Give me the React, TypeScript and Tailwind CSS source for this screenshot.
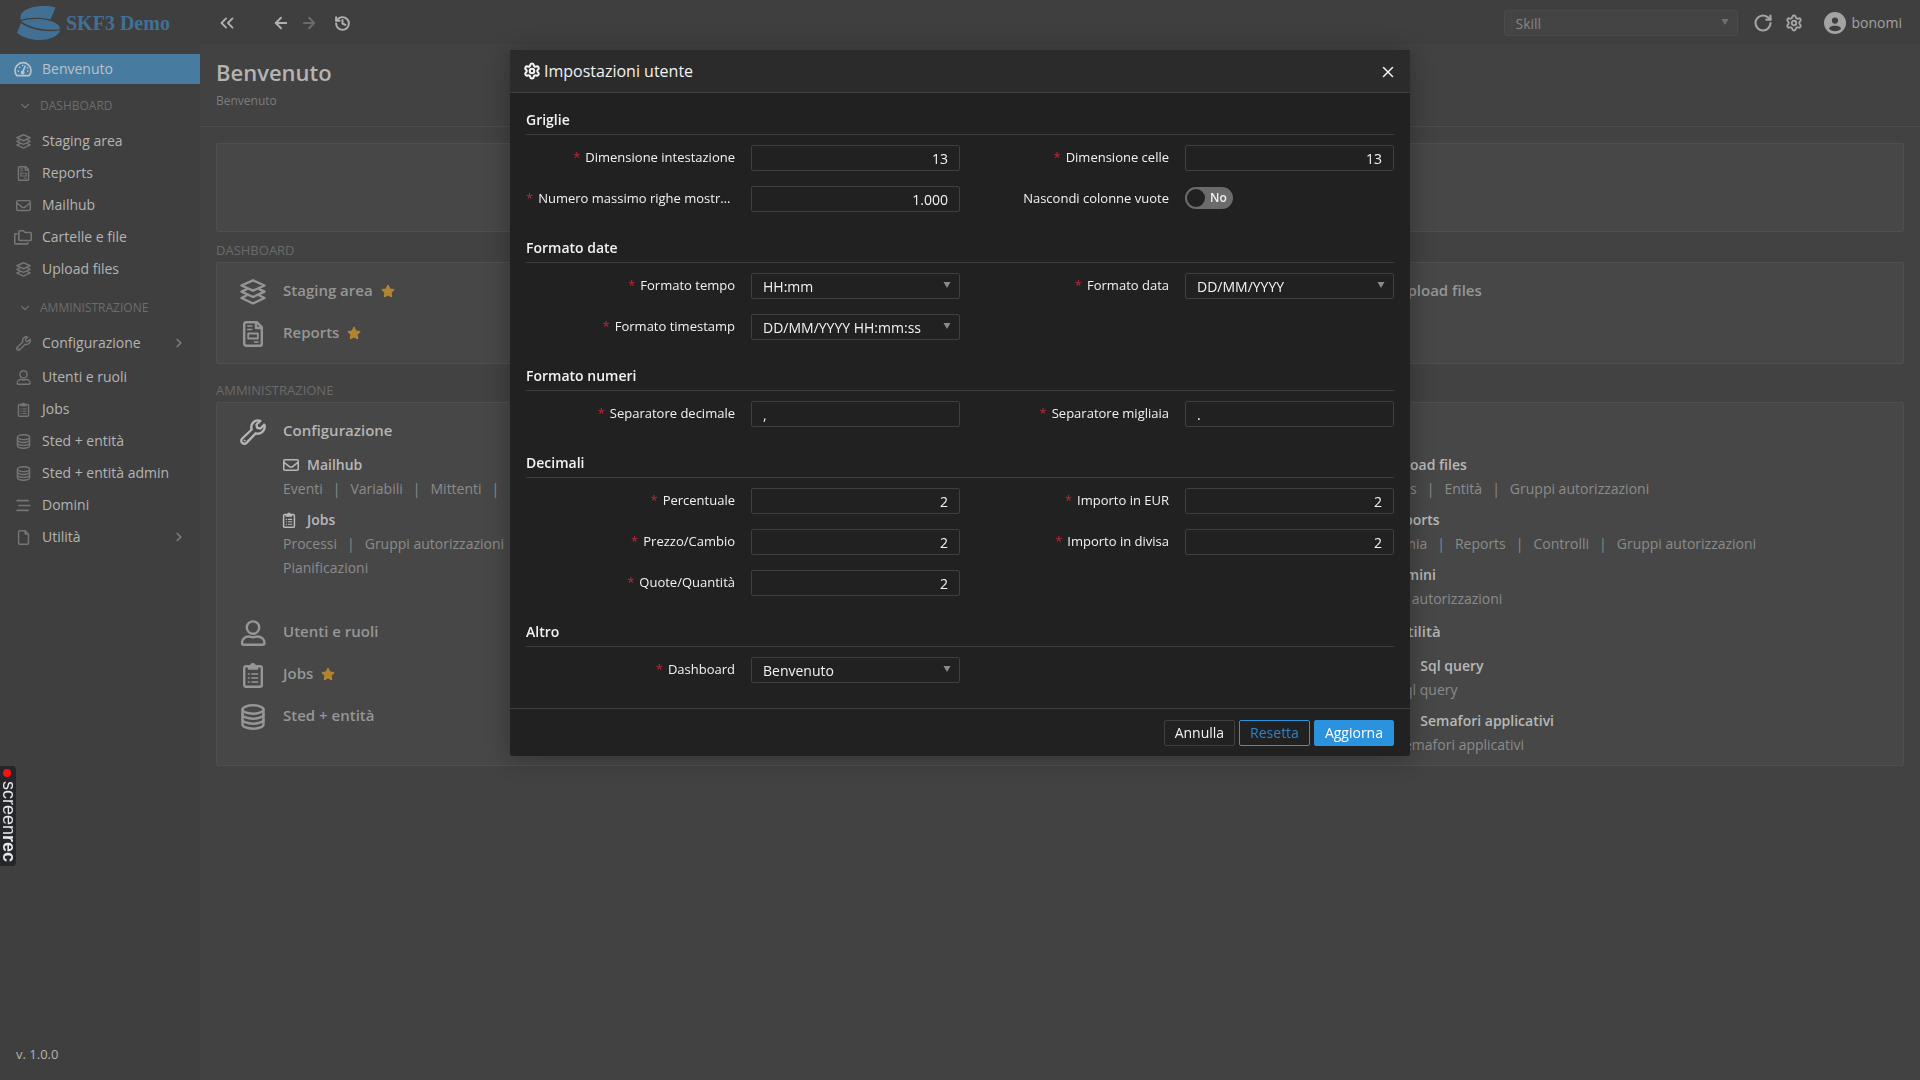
import { ReactNode } from "react";
import {
  ArrowLeft,
  ArrowRight,
  ChevronDown,
  ChevronRight,
  ChevronsLeft,
  History,
  RotateCw,
  Settings,
  X,
} from "lucide-react";
import { FaCircleUser, FaRegEnvelope, FaRegFile, FaStar } from "react-icons/fa6";

type TIcon = { className?: string };

type TMenuItem = {
  title: string;
  icon: ReactNode;
  hasChildren?: boolean;
};

type TField = {
  id: string;
  label: string;
  value: string;
  type: "number" | "text" | "select" | "switch";
};

type TSection = { title: string; fields: TField[] };

type TBlock = { title: string; icon?: ReactNode; links: string[] };

const Svg = ({ className, children }: TIcon & { children: ReactNode }) => (
  <svg
    viewBox="0 0 26 26"
    className={className}
    fill="none"
    stroke="currentColor"
    strokeWidth="2.4"
    strokeLinecap="round"
    strokeLinejoin="round"
    aria-hidden="true"
  >
    {children}
  </svg>
);

const LayersIcon = ({ className }: TIcon) => (
  <Svg className={className}>
    <path d="M13 1.3 24.500 6.500 13 11.700 1.500 6.500z" />
    <path d="M6.500 10.300 1.500 12.700 13 18l11.500-5.300-5-2.400" />
    <path d="M6.500 16.500 1.500 19 13 24.500 24.500 19l-5-2.500" />
  </Svg>
);

const ReportIcon = ({ className }: TIcon) => (
  <Svg className={className}>
    <path d="M4.200 3.200a2 2 0 0 1 2-2h10.600l5 5v16.600a2 2 0 0 1-2 2H6.200a2 2 0 0 1-2-2z" />
    <path d="M16 1.500v5.500h5.500" />
    <path d="M7.800 5h4M7.800 8.500h4M14.500 21h3.500" strokeWidth="1.600" />
    <path d="M8.200 12.500h9.600v5H8.200z" strokeWidth="1.800" />
  </Svg>
);

const FoldersIcon = ({ className }: TIcon) => (
  <Svg className={className}>
    <path d="M7 5.500a1.500 1.500 0 0 1 1.500-1.500h5l2.500 2.500h7.500A1.500 1.500 0 0 1 25 8v8.500a1.500 1.500 0 0 1-1.500 1.500h-15A1.500 1.500 0 0 1 7 16.500z" />
    <path d="M4 8.500H2.500A1.500 1.500 0 0 0 1 10v11.500A1.500 1.500 0 0 0 2.500 23h16a1.500 1.500 0 0 0 1.500-1.500" />
  </Svg>
);

const WrenchIcon = ({ className }: TIcon) => (
  <Svg className={className}>
    <path d="M20.300 1.800a6.800 6.800 0 0 0-8.600 8.700L2.200 19.500a3 3 0 0 0 4.300 4.300l9.200-9.500a6.800 6.800 0 0 0 8.600-8.600L20.500 9.500l-3.300-.700-.700-3.300z" />
    <circle cx="4.600" cy="21.500" r="0.500" strokeWidth="1" />
  </Svg>
);

const UserIcon = ({ className }: TIcon) => (
  <Svg className={className}>
    <circle cx="13" cy="7.600" r="6.200" />
    <path d="M8.500 16.500c2 0 2.500.800 4.500.800s2.500-.800 4.500-.800c4 0 7 2.800 7 6.200 0 1.200-.800 2-2 2H4c-1.200 0-2-.800-2-2 0-3.400 3-6.200 6.500-6.200z" />
  </Svg>
);

const ClipboardIcon = ({ className }: TIcon) => (
  <Svg className={className}>
    <rect x="4.200" y="4.200" width="17.600" height="20.600" rx="1.800" />
    <path d="M8.500 4h2.200a2.300 2.300 0 0 1 4.600 0h2.200v3h-9z" fill="currentColor" strokeWidth="1.400" />
    <path d="M12 12h5.500M12 16h5.500M12 20h5.500M8.500 12h.500M8.500 16h.500M8.500 20h.500" strokeWidth="1.700" />
  </Svg>
);

const DatabaseIcon = ({ className }: TIcon) => (
  <Svg className={className}>
    <ellipse cx="13" cy="5.500" rx="10.500" ry="4.200" />
    <path d="M2.500 5.500v15c0 2.300 4.700 4.200 10.500 4.200s10.500-1.900 10.500-4.200v-15" />
    <path d="M2.500 10.500c0 2.300 4.700 4.200 10.500 4.200s10.500-1.900 10.500-4.200M2.500 15.500c0 2.300 4.700 4.200 10.500 4.200s10.500-1.900 10.500-4.200" />
  </Svg>
);

const GaugeIcon = ({ className }: TIcon) => (
  <Svg className={className}>
    <path d="M4 22.500a11.500 11.500 0 1 1 18 0z" />
    <path d="M12.500 17.500 16 9" />
    <circle cx="12.500" cy="18" r="1.600" fill="currentColor" />
    <path d="M6 16h.500M8 10.500h.300M12.500 8h.100M19.800 16h.200M19.500 11.500h.100" />
  </Svg>
);

const LinesIcon = ({ className }: TIcon) => (
  <Svg className={className}>
    <path d="M2 4.500h19M5 13h19M2 21.500h19" strokeWidth="3" />
  </Svg>
);

const Logo = () => (
  <svg viewBox="0 0 44 35" className="w-11 h-[35px]" fill="#427095" aria-hidden="true">
    <path d="M38.500 1.500 33.500 13.500C24 11 12 11 4 14 1 8 8 2 20 .500c6-.800 13-.500 18.500 1z" />
    <path d="M4.200 15.300C14 11.300 34 12.500 41 19c1.500 1.500 2 3 2 4.300C30 25 14 22.500 4.200 15.300z" />
    <path d="M4 17c9 7 25 9.500 39 7.500-1 5-10 9.500-20 9.500-9 0-17-2.500-23-7z" />
  </svg>
);

const dashboardMenu: TMenuItem[] = [
  { title: "Staging area", icon: <LayersIcon className="size-[15px]" /> },
  { title: "Reports", icon: <ReportIcon className="size-[15px]" /> },
  { title: "Mailhub", icon: <FaRegEnvelope className="size-[15px]" /> },
  { title: "Cartelle e file", icon: <FoldersIcon className="size-[18px]" /> },
  { title: "Upload files", icon: <LayersIcon className="size-[15px]" /> },
];

const adminMenu: TMenuItem[] = [
  { title: "Utenti e ruoli", icon: <UserIcon className="size-[15px]" /> },
  { title: "Jobs", icon: <ClipboardIcon className="size-[15px]" /> },
  { title: "Sted + entità", icon: <DatabaseIcon className="size-[15px]" /> },
  { title: "Sted + entità admin", icon: <DatabaseIcon className="size-[15px]" /> },
  { title: "Domini", icon: <LinesIcon className="size-[15px]" /> },
  { title: "Utilità", icon: <FaRegFile className="size-[15px]" />, hasChildren: true },
];

const configLeft: TBlock[] = [
  {
    title: "Mailhub",
    icon: <FaRegEnvelope className="size-4" />,
    links: ["Eventi", "Variabili", "Mittenti", "Modelli"],
  },
  {
    title: "Jobs",
    icon: <ClipboardIcon className="-ml-0.5 size-4" />,
    links: ["Processi", "Gruppi autorizzazioni", "Pianificazioni"],
  },
];

const configRight: TBlock[] = [
  {
    title: "Upload files",
    icon: <LayersIcon className="size-4" />,
    links: ["Uploads", "Entità", "Gruppi autorizzazioni"],
  },
  {
    title: "Reports",
    icon: <ReportIcon className="size-4" />,
    links: ["Economia", "Reports", "Controlli", "Gruppi autorizzazioni"],
  },
  {
    title: "Domini",
    icon: <LinesIcon className="size-4" />,
    links: ["Gruppi autorizzazioni"],
  },
];

const utilityBlocks: TBlock[] = [
  { title: "Sql query", links: ["Sql query"] },
  { title: "Semafori applicativi", links: ["Semafori applicativi"] },
];

const sections: TSection[] = [
  {
    title: "Griglie",
    fields: [
      { id: "headerSize", label: "Dimensione intestazione", value: "13", type: "number" },
      { id: "cellSize", label: "Dimensione celle", value: "13", type: "number" },
      { id: "maxRows", label: "Numero massimo righe mostrate", value: "1.000", type: "number" },
      { id: "hideEmpty", label: "Nascondi colonne vuote", value: "No", type: "switch" },
    ],
  },
  {
    title: "Formato date",
    fields: [
      { id: "timeFormat", label: "Formato tempo", value: "HH:mm", type: "select" },
      { id: "dateFormat", label: "Formato data", value: "DD/MM/YYYY", type: "select" },
      { id: "timestampFormat", label: "Formato timestamp", value: "DD/MM/YYYY HH:mm:ss", type: "select" },
    ],
  },
  {
    title: "Formato numeri",
    fields: [
      { id: "decimalSeparator", label: "Separatore decimale", value: ",", type: "text" },
      { id: "thousandSeparator", label: "Separatore migliaia", value: ".", type: "text" },
    ],
  },
  {
    title: "Decimali",
    fields: [
      { id: "percent", label: "Percentuale", value: "2", type: "number" },
      { id: "amountEur", label: "Importo in EUR", value: "2", type: "number" },
      { id: "price", label: "Prezzo/Cambio", value: "2", type: "number" },
      { id: "amountCurrency", label: "Importo in divisa", value: "2", type: "number" },
      { id: "quantity", label: "Quote/Quantità", value: "2", type: "number" },
    ],
  },
  {
    title: "Altro",
    fields: [{ id: "dashboard", label: "Dashboard", value: "Benvenuto", type: "select" }],
  },
];

const Caret = ({ className }: TIcon) => (
  <svg
    viewBox="0 0 8 6"
    className={`absolute right-[9px] top-[9px] w-2 h-1.5 pointer-events-none ${className}`}
    fill="currentColor"
    aria-hidden="true"
  >
    <path d="M0.500 0h7L4 6z" />
  </svg>
);

const Header = () => (
  <header className="flex items-center h-11 pt-0.5 bg-[#3f3f3f]">
    <a href="#" className="flex items-center gap-[5px] w-[200px] shrink-0 pl-[17px]">
      <Logo />
      <span className="font-['Liberation_Serif',serif] font-bold text-xl text-[#427095]">
        SKF3 Demo
      </span>
    </a>
    <div className="flex items-center grow pl-4 text-[#b0b0b0]">
      <button aria-label="Comprimi menu">
        <ChevronsLeft className="size-[22px]" />
      </button>
      <button aria-label="Indietro" className="ml-[34px]">
        <ArrowLeft className="size-[18px]" strokeWidth={2.5} />
      </button>
      <button aria-label="Avanti" className="ml-2.5 text-[#6a6a6a]">
        <ArrowRight className="size-[18px]" strokeWidth={2.5} />
      </button>
      <button aria-label="Cronologia" className="ml-4">
        <History className="size-[17px]" strokeWidth={2.8} />
      </button>
    </div>
    <div className="flex items-center pr-[18px] text-[#a3a3a3]">
      <div className="relative mr-[15px]">
        <select
          aria-label="Azienda"
          className="block appearance-none w-[234px] h-[26px] pl-[11px] pr-6 pt-0.5 border border-[#4a4a4a] rounded-xs bg-[#444444] text-[#868686]"
        >
          <option>Skill</option>
        </select>
        <Caret className="text-[#707070]" />
      </div>
      <button aria-label="Aggiorna pagina">
        <RotateCw className="size-5" strokeWidth={2.6} />
      </button>
      <button aria-label="Impostazioni" className="ml-3">
        <Settings className="size-[18px]" strokeWidth={2.6} />
      </button>
      <button className="flex items-center gap-1.5 ml-[21px]">
        <FaCircleUser className="size-[22px]" />
        bonomi
      </button>
    </div>
  </header>
);

const MenuItem = ({ item }: { item: TMenuItem }) => (
  <a href="#" className="flex items-center h-8 pl-3.5 pr-3.5 text-[#b4b4b4]">
    <span className="flex justify-center w-[18px] mr-2.5 text-[#757575]">{item.icon}</span>
    <span className="grow">{item.title}</span>
    {item.hasChildren && <ChevronRight className="size-3.5 text-[#7c7c7c]" strokeWidth={3} />}
  </a>
);

const MenuGroup = ({ title }: { title: string }) => (
  <button className="flex items-center gap-2 h-8 pl-[18px] text-xs text-[#6d6d6d]">
    <ChevronDown className="size-3.5" />
    {title}
  </button>
);

const Sidebar = () => (
  <nav className="flex flex-col w-[200px] shrink-0 pt-2.5 bg-[#3f3f3f]">
    <a href="#" className="flex items-center h-[30px] pl-3.5 bg-[#477ba0] text-[#b9c3ca]">
      <GaugeIcon className="size-[18px] mr-2.5" />
      Benvenuto
    </a>
    <div className="pt-1.5 pb-[3px]">
      <MenuGroup title="DASHBOARD" />
    </div>
    {dashboardMenu.map((el) => (
      <MenuItem key={el.title} item={el} />
    ))}
    <div className="pt-[7px] pb-[3px]">
      <MenuGroup title="AMMINISTRAZIONE" />
    </div>
    <MenuItem
      item={{
        title: "Configurazione",
        icon: <WrenchIcon className="size-[15px]" />,
        hasChildren: true,
      }}
    />
    <div className="pt-0.5">
      {adminMenu.map((el) => (
        <MenuItem key={el.title} item={el} />
      ))}
    </div>
    <p className="mt-auto pl-4 pb-4 text-[13px] text-[#b4b4b4]">v. 1.0.0</p>
  </nav>
);

const Tile = ({
  title,
  icon,
  starred,
  active,
}: {
  title: string;
  icon: ReactNode;
  starred?: boolean;
  active?: boolean;
}) => (
  <a
    href="#"
    className={`flex items-center h-[42px] pl-[11px] text-[15px] font-semibold ${
      active ? "text-[#b4b4b4]" : "text-[#969696]"
    }`}
  >
    <span className="w-[26px] mr-[17px]">{icon}</span>
    <span className="pb-0.5">{title}</span>
    {starred && <FaStar className="size-3.5 ml-2 mb-0.5 text-[#b08430]" />}
  </a>
);

const Block = ({ block }: { block: TBlock }) => (
  <div>
    <p className="flex items-center h-6 font-semibold text-[#b8b8b8]">
      <span className="w-6">{block.icon}</span>
      {block.title}
    </p>
    <ul className="flex flex-wrap leading-6 text-[#8b8b8b]">
      {block.links.map((link, i) => (
        <li key={link}>
          <a href="#">{link}</a>
          {i < block.links.length - 1 && <span className="mx-2.5">|</span>}
        </li>
      ))}
    </ul>
  </div>
);

const Content = () => (
  <main className="grow bg-[#424242]">
    <div className="h-[83px] pl-4 pt-[13px] border-b border-[#4c4c4c]">
      <h1 className="text-[22px] leading-[30px] font-semibold text-[#b4b4b4]">Benvenuto</h1>
      <p className="mt-1.5 text-xs text-[#7c7c7c]">Benvenuto</p>
    </div>
    <div className="px-4 pt-4">
      <div className="h-[89px] border border-[#4f4f4f] rounded-xs bg-[#474747]"></div>
      <h2 className="mt-[9px] mb-0.5 text-[13px] leading-[19px] font-medium text-[#6a6a6a]">
        DASHBOARD
      </h2>
      <div className="grid grid-cols-3 pl-3 pr-1 py-2 border border-[#4f4f4f] rounded-xs bg-[#474747]">
        <div>
          <Tile title="Staging area" icon={<LayersIcon className="size-[26px]" />} starred />
          <Tile title="Reports" icon={<ReportIcon className="size-[26px]" />} starred />
        </div>
        <div className="col-start-3">
          <Tile title="Upload files" icon={<LayersIcon className="size-[26px]" />} />
        </div>
      </div>
      <h2 className="mt-[17px] mb-0.5 text-[13px] leading-[19px] font-medium text-[#6a6a6a]">
        AMMINISTRAZIONE
      </h2>
      <div className="py-2 border border-[#4f4f4f] rounded-xs bg-[#474747]">
        <div className="pl-3">
          <Tile title="Configurazione" icon={<WrenchIcon className="size-[26px]" />} active />
        </div>
        <div className="grid grid-cols-3 pl-[66px] pb-px">
          <div className="flex flex-col gap-[7px] pr-[230px]">
            {configLeft.map((el) => (
              <Block key={el.title} block={el} />
            ))}
          </div>
          <div className="col-start-3 flex flex-col gap-[7px]">
            {configRight.map((el) => (
              <Block key={el.title} block={el} />
            ))}
          </div>
        </div>
        <div className="grid grid-cols-3 pl-3 pr-1">
          <div>
            <Tile title="Utenti e ruoli" icon={<UserIcon className="size-[26px]" />} />
            <Tile title="Jobs" icon={<ClipboardIcon className="size-[26px]" />} starred />
            <Tile title="Sted + entità" icon={<DatabaseIcon className="size-[26px]" />} />
          </div>
          <div className="col-start-3">
            <Tile title="Utilità" icon={<FaRegFile className="size-[26px]" />} active />
            <div className="flex flex-col gap-[7px] pl-[54px]">
              {utilityBlocks.map((el) => (
                <Block key={el.title} block={el} />
              ))}
            </div>
          </div>
        </div>
      </div>
    </div>
  </main>
);

const FieldControl = ({ field }: { field: TField }) => {
  if (field.type === "switch") {
    return (
      <span className="relative flex items-center w-12 h-[22px] mb-0.5 rounded-full bg-[#6b6b6b]">
        <input
          id={field.id}
          type="checkbox"
          role="switch"
          className="absolute inset-0 appearance-none rounded-full cursor-pointer"
        />
        <span className="size-[18px] ml-0.5 mr-[5px] rounded-full bg-[#212121] pointer-events-none"></span>
        <span className="text-xs font-semibold pointer-events-none">{field.value}</span>
      </span>
    );
  }

  if (field.type === "select") {
    return (
      <span className="relative grow">
        <select
          id={field.id}
          className="block appearance-none w-full h-[26px] pl-[11px] pr-6 pt-0.5 border border-[#3f3f3f] rounded-xs bg-[#212121]"
        >
          <option>{field.value}</option>
        </select>
        <Caret className="text-[#8a8a8a]" />
      </span>
    );
  }

  return (
    <input
      id={field.id}
      type="text"
      defaultValue={field.value}
      className={`grow min-w-0 h-[26px] px-[11px] pt-px border border-[#3f3f3f] rounded-xs bg-[#212121] ${
        field.type === "number" ? "text-right" : ""
      }`}
    />
  );
};

const SettingsDialog = () => (
  <div className="fixed inset-0 flex items-start justify-center pt-[50px]">
    <form
      role="dialog"
      aria-labelledby="dialogTitle"
      className="w-[900px] max-w-full rounded-xs bg-[#212121] text-[#f2f2f2] shadow-[0_2px_24px_rgba(0,0,0,0.3)]"
    >
      <div className="flex items-center h-[43px] px-[13px] rounded-t-xs border-b border-[#3f3f3f] bg-[#2b2b2b]">
        <Settings className="size-[18px] mr-[3px]" strokeWidth={2.8} />
        <h2 id="dialogTitle" className="grow text-base">
          Impostazioni utente
        </h2>
        <button type="button" aria-label="Chiudi" className="pt-0.5">
          <X className="size-[18px]" />
        </button>
      </div>
      <div className="px-4 pt-[17px] pb-[25px]">
        {sections.map((section) => (
          <fieldset key={section.title} className="mb-[26px] last:mb-0">
            <legend className="w-full h-[25px] leading-5 border-b border-[#3f3f3f] font-semibold">
              {section.title}
            </legend>
            <div className="grid grid-cols-2 gap-y-[15px] pt-2.5">
              {section.fields.map((field) => (
                <div key={field.id} className="flex items-center h-[26px]">
                  <label
                    htmlFor={field.id}
                    className="w-[209px] mr-4 pb-0.5 truncate text-right text-[13px]"
                  >
                    {field.type !== "switch" && <span className="mr-[5px] text-[#c0283a]">*</span>}
                    {field.label}
                  </label>
                  <FieldControl field={field} />
                </div>
              ))}
            </div>
          </fieldset>
        ))}
      </div>
      <div className="flex justify-end gap-1 px-4 pt-[11px] pb-2.5 border-t border-[#3f3f3f]">
        <button type="button" className="h-[26px] px-2.5 border border-[#3f3f3f] rounded-xs">
          Annulla
        </button>
        <button
          type="button"
          className="h-[26px] px-2.5 border border-[#2b92de] rounded-xs text-[#2b84c8]"
        >
          Resetta
        </button>
        <button
          type="submit"
          className="h-[26px] px-2.5 border border-[#2b92de] rounded-xs bg-[#2b92de] text-white"
        >
          Aggiorna
        </button>
      </div>
    </form>
  </div>
);

const RecorderBadge = () => (
  <div className="fixed left-0 top-[766px] flex flex-col items-center w-4 h-[100px] pt-[3px] rounded-r-sm bg-[#24262c]">
    <span className="size-2 mr-0.5 shrink-0 rounded-full bg-[#fb1010]"></span>
    <span className="mt-1 ml-0.5 [writing-mode:vertical-rl] font-['Liberation_Sans',sans-serif] text-lg leading-4 text-[#e8e8e8]">
      screen<b>rec</b>
    </span>
  </div>
);

const App = () => {
  return (
    <div className="flex flex-col min-h-screen font-['Open_Sans',sans-serif] text-sm">
      <Header />
      <div className="flex grow">
        <Sidebar />
        <Content />
      </div>
      <SettingsDialog />
      <RecorderBadge />
    </div>
  );
};

export default App;
